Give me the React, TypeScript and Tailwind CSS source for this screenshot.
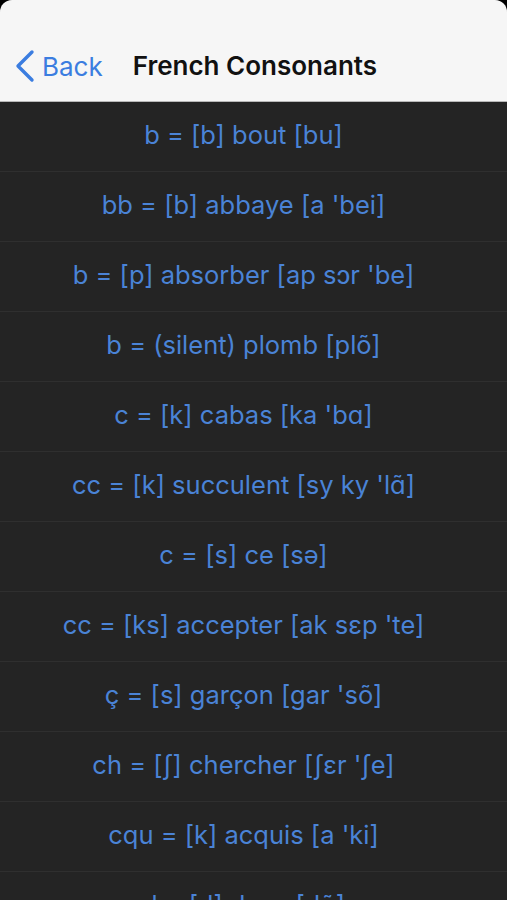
const rows: string[] = [
  "b = [b] bout [bu]",
  "bb = [b] abbaye [a 'bei]",
  "b = [p] absorber [ap sɔr 'be]",
  "b = (silent) plomb [plõ]",
  "c = [k] cabas [ka 'bɑ]",
  "cc = [k] succulent [sy ky 'lɑ̃]",
  "c = [s] ce [sə]",
  "cc = [ks] accepter [ak sɛp 'te]",
  "ç = [s] garçon [gar 'sõ]",
  "ch = [ʃ] chercher [ʃɛr 'ʃe]",
  "cqu = [k] acquis [a 'ki]",
  "d = [d] dans [dɑ̃]",
];

const App = () => {
  return (
    <div className="w-[507px] h-[900px] overflow-hidden bg-black" style={{ fontFamily: "Inter, 'Liberation Sans', sans-serif" }}>
      <div className="h-full rounded-t-[12px] overflow-hidden bg-[#242424]">
        <header className="h-[102px] bg-[#f6f6f6] border-b border-[#b8b8b8] flex items-start pt-[48px]">
          <button className="flex items-center h-[36px] text-[#3b7de0] pl-[14px]">
            <svg width="21" height="34" viewBox="0 0 21 34" fill="none">
              <path d="M18 3 L4 17 L18 31" stroke="currentColor" strokeWidth="3.4" strokeLinecap="round" strokeLinejoin="round" />
            </svg>
            <span className="ml-[7px] text-[26px] leading-none pt-[1px]">Back</span>
          </button>
          <h1 className="ml-[30px] h-[36px] flex items-center text-[26px] font-semibold text-[#111] leading-none">French Consonants</h1>
        </header>

        <ul>
          {rows.map((row, index) => (
            <li
              key={index}
              className="h-[70px] border-b border-[#2f2f2f] flex items-center justify-center pr-[20px] pb-[3px] text-[25.5px] text-[#4a83d6]"
            >
              {row}
            </li>
          ))}
        </ul>
      </div>
    </div>
  );
};

export default App;
